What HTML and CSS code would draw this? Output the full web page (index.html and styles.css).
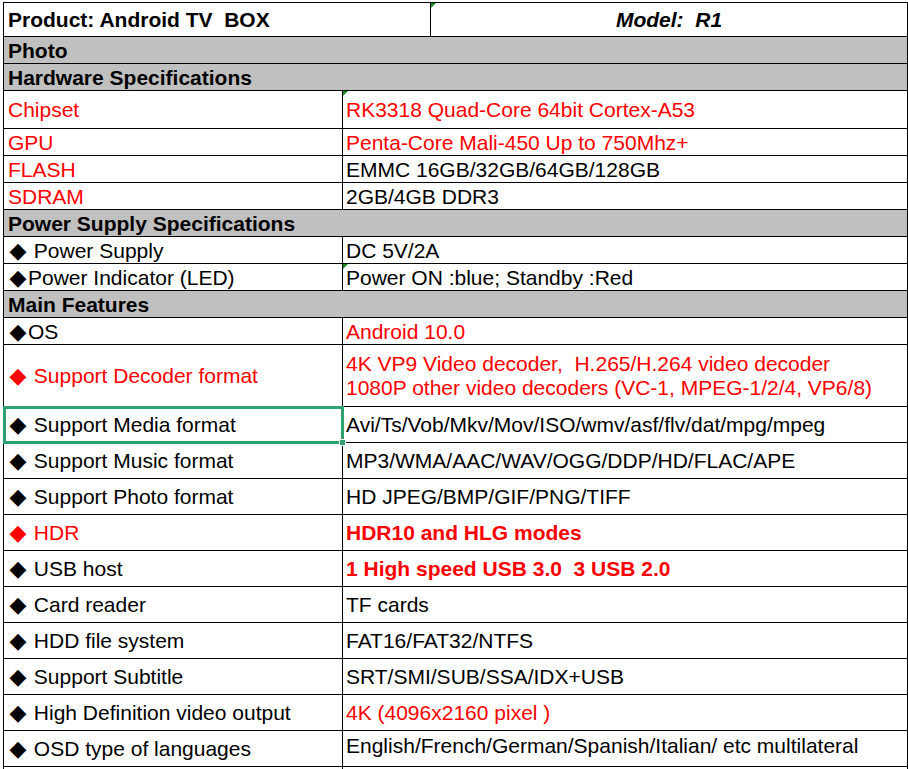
FILE: index.html
```html
<!DOCTYPE html>
<html lang="en">
<head>
    <meta charset="UTF-8">
    <title>Android TV BOX R1 - Specifications</title>
    <link rel="stylesheet" href="styles.css">
</head>
<body>
    <table class="spec">
        <colgroup>
            <col class="col-label">
            <col class="col-mid">
            <col class="col-right">
        </colgroup>
        <tr class="h34">
            <td colspan="2" class="title">Product: Android TV&nbsp; BOX</td>
            <td class="model flag">Model:&nbsp; R1</td>
        </tr>
        <tr class="h27 section"><td colspan="3">Photo</td></tr>
        <tr class="h27 section"><td colspan="3">Hardware Specifications</td></tr>
        <tr class="h38 red">
            <td>Chipset</td>
            <td colspan="2" class="val flag">RK3318 Quad-Core 64bit Cortex-A53</td>
        </tr>
        <tr class="h27 red">
            <td>GPU</td>
            <td colspan="2" class="val">Penta-Core Mali-450 Up to 750Mhz+</td>
        </tr>
        <tr class="h27">
            <td class="red">FLASH</td>
            <td colspan="2" class="val">EMMC 16GB/32GB/64GB/128GB</td>
        </tr>
        <tr class="h27">
            <td class="red">SDRAM</td>
            <td colspan="2" class="val">2GB/4GB DDR3</td>
        </tr>
        <tr class="h27 section"><td colspan="3">Power Supply Specifications</td></tr>
        <tr class="h27">
            <td><span class="dot">◆</span> Power Supply</td>
            <td colspan="2" class="val">DC 5V/2A</td>
        </tr>
        <tr class="h27">
            <td><span class="dot">◆</span>Power Indicator (LED)</td>
            <td colspan="2" class="val flag">Power ON :blue; Standby :Red</td>
        </tr>
        <tr class="h27 section"><td colspan="3">Main Features</td></tr>
        <tr class="h27">
            <td><span class="dot">◆</span>OS</td>
            <td colspan="2" class="val red">Android 10.0</td>
        </tr>
        <tr class="h62 red">
            <td><span class="dot">◆</span> Support Decoder format</td>
            <td colspan="2" class="val two">4K VP9 Video decoder,&nbsp; H.265/H.264 video decoder<br>1080P other video decoders (VC-1, MPEG-1/2/4, VP6/8)</td>
        </tr>
        <tr class="h36">
            <td class="sel"><span class="dot">◆</span> Support Media format</td>
            <td colspan="2" class="val">Avi/Ts/Vob/Mkv/Mov/ISO/wmv/asf/flv/dat/mpg/mpeg</td>
        </tr>
        <tr class="h36">
            <td><span class="dot">◆</span> Support Music format</td>
            <td colspan="2" class="val">MP3/WMA/AAC/WAV/OGG/DDP/HD/FLAC/APE</td>
        </tr>
        <tr class="h36">
            <td><span class="dot">◆</span> Support Photo format</td>
            <td colspan="2" class="val">HD JPEG/BMP/GIF/PNG/TIFF</td>
        </tr>
        <tr class="h36 red">
            <td><span class="dot">◆</span> HDR</td>
            <td colspan="2" class="val strong">HDR10 and HLG modes</td>
        </tr>
        <tr class="h36">
            <td><span class="dot">◆</span> USB host</td>
            <td colspan="2" class="val red strong">1 High speed USB 3.0&nbsp; 3 USB 2.0</td>
        </tr>
        <tr class="h36">
            <td><span class="dot">◆</span> Card reader</td>
            <td colspan="2" class="val">TF cards</td>
        </tr>
        <tr class="h36">
            <td><span class="dot">◆</span> HDD file system</td>
            <td colspan="2" class="val">FAT16/FAT32/NTFS</td>
        </tr>
        <tr class="h36">
            <td><span class="dot">◆</span> Support Subtitle</td>
            <td colspan="2" class="val">SRT/SMI/SUB/SSA/IDX+USB</td>
        </tr>
        <tr class="h36">
            <td><span class="dot">◆</span> High Definition video output</td>
            <td colspan="2" class="val red">4K (4096x2160 pixel )</td>
        </tr>
        <tr class="h36">
            <td><span class="dot">◆</span> OSD type of languages</td>
            <td colspan="2" class="val top">English/French/German/Spanish/Italian/ etc multilateral</td>
        </tr>
        <tr class="h36">
            <td></td>
            <td colspan="2" class="val"></td>
        </tr>
    </table>
</body>
</html>
```

FILE: styles.css
```css
body {
    margin: 0;
    padding: 0;
    background-color: #ffffff;
    font-family: "Liberation Sans", Arial, sans-serif;
    font-size: 21px;
    color: #000000;
}
.spec {
    border-collapse: collapse;
    table-layout: fixed;
    width: 904px;
    margin: 2px 0 0 3px;
}
.col-label {
    width: 339px;
}
.col-mid {
    width: 88px;
}
.col-right {
    width: 477px;
}
.spec td {
    border: 1px solid #000000;
    padding: 1px 4px 0 4px;
    white-space: nowrap;
    vertical-align: middle;
    line-height: 24px;
    position: relative;
}
.spec td.val {
    padding-left: 3px;
}
.h27 { height: 27px; }
.h34 { height: 34px; }
.h36 { height: 36px; }
.h38 { height: 38px; }
.h62 { height: 62px; }
.title {
    font-weight: bold;
}
.model {
    font-weight: bold;
    font-style: italic;
    text-align: center;
    padding-left: 20px;
}
.section td {
    background-color: #c0c0c0;
    font-weight: bold;
}
.red {
    color: #ff0000;
}
.strong {
    font-weight: bold;
}
.dot {
    display: inline-block;
    width: 20px;
    text-align: center;
    font-family: "DejaVu Sans", sans-serif;
    font-size: 22px;
    line-height: 20px;
}
.two {
    line-height: 28px;
}
.spec td.top {
    vertical-align: top;
    padding-top: 1px;
    line-height: 28px;
}
/* green marker in cell corner */
.flag::before {
    content: "";
    position: absolute;
    left: 0;
    top: 0;
    border-top: 5px solid #1e8a1e;
    border-right: 5px solid transparent;
}
/* selected cell */
.spec td.sel {
    outline: 3px solid #2ea172;
    outline-offset: -2px;
}
.sel::before {
    content: "";
    position: absolute;
    right: -4px;
    bottom: -4px;
    width: 5px;
    height: 5px;
    background-color: #2ea172;
    border: 1px solid #ffffff;
    z-index: 3;
}
```
